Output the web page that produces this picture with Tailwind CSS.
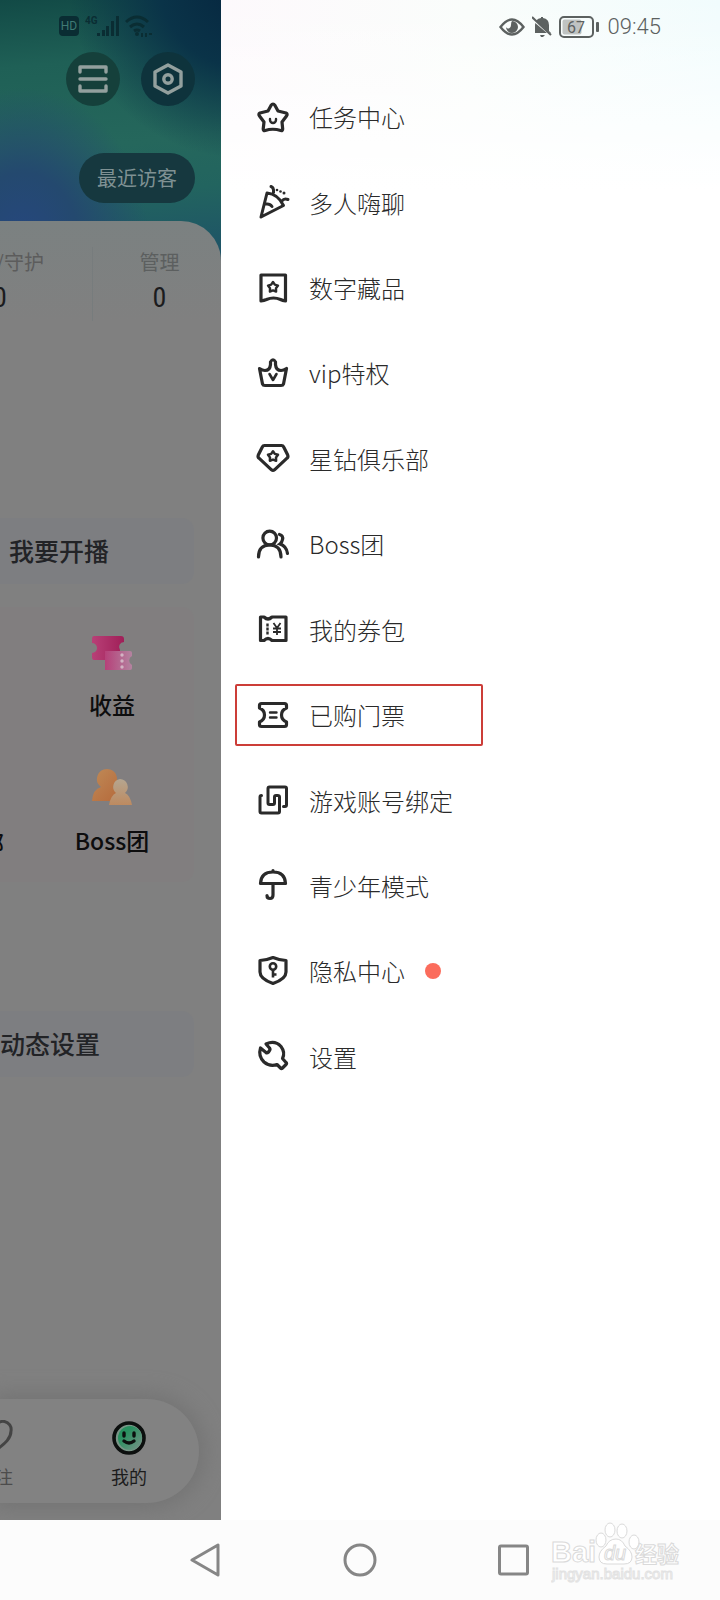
<!DOCTYPE html>
<html lang="zh-CN">
<head>
  <meta charset="UTF-8" />
  <meta name="viewport" content="width=device-width, initial-scale=1.0" />
  <title>我的</title>
  <script src="https://cdn.jsdelivr.net/npm/@tailwindcss/browser@4"></script>
</head>
<body class="min-h-screen flex flex-col bg-white font-['Noto_Sans_CJK_SC',sans-serif] overflow-x-hidden">

  <div class="flex flex-1">

    <!-- Página de perfil, escurecida -->
    <section class="w-[221px] shrink-0 flex flex-col overflow-hidden bg-[#808080]">
      <div class="bg-[radial-gradient(circle_at_110%_-5%,#06263f_0%,#0a3348_20%,transparent_42%),radial-gradient(ellipse_at_10%_75%,#26477e_0%,#24496f_20%,transparent_45%),linear-gradient(175deg,#124a46_0%,#1f6056_20%,#25675c_45%,#22645f_60%,#1e5367_80%)]">
        <header class="h-[221px] flex flex-col items-end pr-[26px]">
          <!-- Barra de status -->
          <div class="h-[52px] pr-[42px] flex items-center gap-[6px] text-[#0a2d33]">
            <svg class="w-[20px] h-[20px]" viewBox="0 0 20 20"><rect width="20" height="20" rx="4" fill="currentColor"/><text x="10" y="14" text-anchor="middle" font-family="Roboto" font-size="12" fill="#3f7a74">HD</text></svg>
            <svg class="w-[34px] h-[22px]" viewBox="0 0 34 22" fill="currentColor"><text x="0" y="9" font-family="Roboto" font-size="10" font-weight="700">4G</text><rect x="12" y="18" width="3" height="3"/><rect x="17" y="15" width="3" height="6"/><rect x="21" y="11" width="3" height="10"/><rect x="26" y="6" width="3" height="15"/><rect x="31" y="1" width="3" height="20"/></svg>
            <svg class="w-[28px] h-[22px]" viewBox="0 0 28 22" fill="none" stroke="currentColor" stroke-width="3"><path d="M1 7Q12-3 23 7M5 12q7-6 14 0M9 16q3-2 6 0"/><circle cx="12" cy="19" r="2" fill="currentColor" stroke="none"/><path d="M17 18v4M21 18v4M24 19h3" stroke-width="2"/></svg>
          </div>
          <div class="flex gap-[21px]">
            <button aria-label="扫一扫" class="size-[54px] rounded-full bg-[#15403b] grid place-items-center">
              <svg class="w-[30px] h-[28px]" viewBox="0 0 30 28" fill="none" stroke="#93a09e" stroke-width="3.4" stroke-linecap="round" stroke-linejoin="round"><path d="M2 7V2h26v5M2 14h26M2 21v5h26v-5"/></svg>
            </button>
            <button aria-label="设置" class="size-[54px] rounded-full bg-[#0e333c] grid place-items-center">
              <svg class="w-[30px] h-[32px]" viewBox="0 0 30 32" fill="none" stroke="#93a09e" stroke-width="3.4" stroke-linejoin="round"><path d="M15 2l13 7v14l-13 7-13-7V9z"/><circle cx="15" cy="16" r="4.2"/></svg>
            </button>
          </div>
          <button class="mt-[47px] h-[50px] px-[18px] rounded-full bg-[#16383f] text-[#7f9193] text-[20px]">最近访客</button>
        </header>

        <!-- Contadores -->
        <div class="h-[100px] pt-[26px] flex justify-end rounded-tr-[40px] bg-linear-to-b from-[#7b8181] to-[#808080] leading-[30px] text-center">
          <div class="w-[184px] shrink-0">
            <p class="text-[20px] text-[#5c5c5c]">粉丝/守护</p>
            <p class="mt-[6px] text-[28px] text-[#1b1c1e] font-['Liberation_Sans_Narrow','Roboto_Condensed',Roboto,sans-serif]">0</p>
          </div>
          <div class="w-[134px] -mr-[5px] shrink-0 border-l border-[#777c7d]">
            <p class="text-[20px] text-[#5c5f5f]">管理</p>
            <p class="mt-[6px] text-[28px] text-[#1b1c1e] font-['Liberation_Sans_Narrow','Roboto_Condensed',Roboto,sans-serif]">0</p>
          </div>
        </div>
      </div>

      <button class="mt-[197px] mr-[27px] h-[66px] pl-[9px] rounded-r-xl bg-[#7d7e81] text-left text-[25px] font-medium text-[#222326]">我要开播</button>

      <div class="mt-[23px] mr-[27px] h-[275px] pt-[29px] flex justify-end rounded-r-xl bg-[#817e7f] text-[23px] leading-[32px] font-medium text-[#0d0d0e]">
        <div class="flex flex-col justify-end shrink-0 pb-6">
          <p>俱乐部</p>
        </div>
        <div class="ml-[26px] w-[164px] shrink-0 flex flex-col items-center gap-[49px]">
          <div class="flex flex-col items-center">
            <svg class="w-[42px] h-[35px]" viewBox="0 0 42 35"><defs><linearGradient id="ticket" x1="0" x2="1"><stop offset="0" stop-color="#b84077"/><stop offset="1" stop-color="#a01f58"/></linearGradient><linearGradient id="ticket2" x1="0" x2="1"><stop offset="0" stop-color="#b64079"/><stop offset="1" stop-color="#b483a0"/></linearGradient></defs><path d="M3 0h27q3 0 3 3v3a5 5 0 0 0-4 8v10H3q-2 0-2-3v-4a5 5 0 0 0 0-10V3q0-3 2-3z" fill="url(#ticket)"/><path d="M14 15h25q2 0 2 2v3a5 5 0 0 0 0 9v3q0 2-2 2H14z" fill="url(#ticket2)"/><g fill="#d2b4c3"><circle cx="31" cy="19" r="1.7"/><circle cx="31" cy="25" r="1.7"/><circle cx="31" cy="31" r="1.7"/></g></svg>
            <p class="mt-[17px]">收益</p>
          </div>
          <div class="flex flex-col items-center">
            <svg class="w-[42px] h-[37px]" viewBox="0 0 42 37"><defs><linearGradient id="man" x1="0" y1="0" x2="1" y2="1"><stop offset="0" stop-color="#bf8a57"/><stop offset="1" stop-color="#b5683a"/></linearGradient><linearGradient id="man2" x1="0" y1="0" x2="0" y2="1"><stop offset="0" stop-color="#b5a690"/><stop offset="1" stop-color="#bd8a60"/></linearGradient></defs><path d="M16 0a10 10 0 0 1 6 18q7 3 9 14H1q1-12 9-14A10 10 0 0 1 16 0z" fill="url(#man)"/><path d="M29 10a8 8 0 0 1 5 14q5 2 7 12H18q2-10 7-12a8 8 0 0 1 4-14z" fill="url(#man2)"/></svg>
            <p class="mt-[18px]">Boss团</p>
          </div>
        </div>
      </div>

      <button class="mt-[129px] mr-[27px] h-[66px] rounded-r-xl bg-[#7d7e81] text-left text-[25px] font-medium text-[#222326]">动态设置</button>

      <!-- Abas inferiores -->
      <nav class="mt-auto mb-[17px] mr-[22px] h-[104px] pt-[21px] pr-[3px] flex justify-end rounded-r-full bg-[#828282] shadow-[0_0_20px_6px_#747474] text-[18px] leading-[26px]">
        <a href="#" class="w-[134px] shrink-0 flex flex-col items-center gap-[7px] text-[#4c4c4c]">
          <svg class="size-[36px]" viewBox="0 0 36 36" fill="none" stroke="#444" stroke-width="3"><path d="M18 31C7 23 2 18 2 11A8 8 0 0 1 18 8a8 8 0 0 1 16 3c0 7-5 12-16 20z"/></svg>
          <span>关注</span>
        </a>
        <a href="#" class="w-[134px] shrink-0 flex flex-col items-center gap-[7px] text-[#1c1c1c]">
          <svg class="size-[36px]" viewBox="0 0 36 36" fill="none"><defs><linearGradient id="face" x1="0" y1="0" x2="1" y2="1"><stop offset=".3" stop-color="#28905f"/><stop offset="1" stop-color="#7b9189"/></linearGradient></defs><circle cx="18" cy="18" r="15" fill="#799487" stroke="#0c0f0e" stroke-width="3.6"/><circle cx="19" cy="18" r="12" fill="url(#face)"/><path d="M13 13v3M23 13v3M13 21q5 4 10 0" stroke="#0c0f0e" stroke-width="3.4" stroke-linecap="round"/></svg>
          <span>我的</span>
        </a>
      </nav>
    </section>

    <!-- Menu lateral -->
    <main class="flex-1 flex flex-col bg-[linear-gradient(to_bottom,transparent,#fff_190px),linear-gradient(to_right,#fdf9fc,#fafdfb_50%,#f1fcfd)]">
      <div class="h-[54px] pr-[59px] flex items-center justify-end gap-[7px] text-[#5c6160]">
        <svg class="w-[26px] h-[18px]" viewBox="0 0 26 18"><path d="M1.500 9Q13-6 24.500 9 13 24 1.500 9z" fill="none" stroke="currentColor" stroke-width="2.400"/><path d="M13 3a6 6 0 1 1-6 6q1 2 3 1.500T12 7t1-4z" fill="currentColor"/></svg>
        <svg class="w-[20px] h-[22px]" viewBox="0 0 20 22"><path d="M3 17V9q0-6 6-7V1h2v1q6 1 6 7v6l2 2z" fill="currentColor"/><path d="M8 19h5l-2 2H9z" fill="currentColor"/><path d="M0 3l20 17" stroke="#fafcfb" stroke-width="2"/><path d="M0 1l19 18" stroke="currentColor" stroke-width="2"/></svg>
        <svg class="w-[40px] h-[22px]" viewBox="0 0 40 22"><rect x="1" y="1" width="33" height="20" rx="4" fill="none" stroke="currentColor" stroke-width="2"/><rect x="3.500" y="3.500" width="19" height="15" rx="2" fill="#bfc3c2"/><rect x="37" y="6" width="3" height="10" rx="1" fill="currentColor"/><text x="17" y="17" text-anchor="middle" font-family="Roboto" font-size="16" fill="currentColor">67</text></svg>
        <time class="pl-[2px] text-[22px] leading-[30px] font-light font-[Roboto,sans-serif]">09:45</time>
      </div>

      <ul class="mt-[20px] h-[1025px] grid auto-rows-fr items-center pl-[14px] text-[24px] font-light text-[#2a2a2a]">
        <li>
          <a href="#" class="w-[248px] h-[62px] pl-[18px] flex items-center gap-[18px] border-2 border-transparent">
            <svg class="size-[36px]" viewBox="0 0 36 36" fill="none" stroke="currentColor" stroke-width="3.2" stroke-linecap="round" stroke-linejoin="round"><path d="M16 6.500q2-3 4 0l3 5.500 8 2q2 1 .5 3l-4.500 6 .7 7q0 2-2 1.500-8-2.500-15.500 0-2 .5-2-1.500l.8-7-4.500-6q-1.500-2 .5-3l8-2z"/><path d="M15 20v1a3 3 0 0 0 6 0v-1" stroke-width="2.400"/></svg>
            <span class="pt-px">任务中心</span>
          </a>
        </li>
        <li>
          <a href="#" class="w-[248px] h-[62px] pl-[18px] flex items-center gap-[18px] border-2 border-transparent">
            <svg class="size-[36px]" viewBox="0 0 36 36" fill="none" stroke="currentColor" stroke-width="3" stroke-linecap="round" stroke-linejoin="round"><path d="M12 9L6 33l22.500-11.500Q23 10 12 9zM11 20q4-.5 6 2.500M16 2.500q3 1 2.500 6M27 17q2-3 6-1.500"/><g fill="currentColor" stroke="none"><circle cx="22" cy="6" r="1.300"/><circle cx="25.500" cy="7.500" r="1.300"/><circle cx="29" cy="9" r="1.500"/></g></svg>
            <span class="pt-px">多人嗨聊</span>
          </a>
        </li>
        <li>
          <a href="#" class="w-[248px] h-[62px] pl-[18px] flex items-center gap-[18px] border-2 border-transparent">
            <svg class="size-[36px]" viewBox="0 0 36 36" fill="none" stroke="currentColor" stroke-width="3.2" stroke-linejoin="round"><path d="M6 5h24.500v26q-3-.5-5-1.500-7-3-14 0-2.500 1-5.500 1.500z"/><path d="M18 12l1.800 2.700 3.200.9-2 2.600.1 3.300-3.100-1.100-3.100 1.100.1-3.300-2-2.600 3.200-.9z" stroke-width="2.400"/></svg>
            <span class="pt-px">数字藏品</span>
          </a>
        </li>
        <li>
          <a href="#" class="w-[248px] h-[62px] pl-[18px] flex items-center gap-[18px] border-2 border-transparent">
            <svg class="size-[36px]" viewBox="0 0 36 36" fill="none" stroke="currentColor" stroke-width="3.2" stroke-linecap="round" stroke-linejoin="round"><path d="M4.500 13.500q3 2 5.500 2 5 0 5.500-6V7q2.500-4.500 5 0v2.500q.5 6 5.500 6 2.500 0 5.500-2L28.500 29q-.5 1.500-2.500 1.500h-16q-2 0-2.500-1.500z"/><path d="M14.500 19l3.500 6 3.500-6" stroke-width="2.600"/></svg>
            <span class="pt-px">vip特权</span>
          </a>
        </li>
        <li>
          <a href="#" class="w-[248px] h-[62px] pl-[18px] flex items-center gap-[18px] border-2 border-transparent">
            <svg class="size-[36px]" viewBox="0 0 36 36" fill="none" stroke="currentColor" stroke-width="3.2" stroke-linejoin="round"><path d="M9.500 5.500h17q1.500 0 2.200 1.500l4 8q.8 2-.7 3.200L19.500 29.800q-1.500 1.200-3 0L4 18.200q-1.500-1.200-.7-3.200l4-8q.7-1.500 2.200-1.500z"/><path d="M18 11.200l1.800 2.700 3.200.9-2 2.600.1 3.300-3.100-1.100-3.100 1.100.1-3.300-2-2.600 3.200-.9z" stroke-width="2.500"/></svg>
            <span class="pt-px">星钻俱乐部</span>
          </a>
        </li>
        <li>
          <a href="#" class="w-[248px] h-[62px] pl-[18px] flex items-center gap-[18px] border-2 border-transparent">
            <svg class="size-[36px]" viewBox="0 0 36 36" fill="none" stroke="currentColor" stroke-width="3.2" stroke-linecap="round"><circle cx="14.700" cy="12" r="6.800"/><path d="M3.500 31q0-12 11.200-12t11.300 12M24.500 8.500q4 1 3 5-.5 3-2.500 4.500 6.500 2 7.500 9.500"/></svg>
            <span class="pt-px">Boss团</span>
          </a>
        </li>
        <li>
          <a href="#" class="w-[248px] h-[62px] pl-[18px] flex items-center gap-[18px] border-2 border-transparent">
            <svg class="size-[36px]" viewBox="0 0 36 36" fill="none" stroke="currentColor" stroke-width="3.200" stroke-linejoin="round"><path d="M5.500 6h3.500q4 4 8 0h14v23.500H17q-4-4-8 0H5.500z"/><path d="M12.500 12.500v3M12.500 16.500v3M12.500 20.500v3" stroke-width="2.400"/><path d="M18.500 12l3.500 5 3.500-5M18 17.500h8M18 21h8M22 17v7" stroke-width="1.800"/></svg>
            <span class="pt-px">我的券包</span>
          </a>
        </li>
        <li>
          <a href="#" class="w-[248px] h-[62px] pl-[18px] flex items-center gap-[18px] border-2 border-[#cc3d38] rounded-xs">
            <svg class="size-[36px]" viewBox="0 0 36 36" fill="none" stroke="currentColor" stroke-width="3.200" stroke-linejoin="round" stroke-linecap="round"><path d="M6.500 6.500h23q2 0 2 2v2.500q-5 2-5 7t5 7v2.500q0 2-2 2h-23q-2 0-2-2V25q5-2 5-7t-5-7V8.500q0-2 2-2z"/><path d="M15 15.500h6.500M15 20.500h6.500" stroke-width="2.400"/></svg>
            <span class="pt-px">已购门票</span>
          </a>
        </li>
        <li>
          <a href="#" class="w-[248px] h-[62px] pl-[18px] flex items-center gap-[18px] border-2 border-transparent">
            <svg class="size-[36px]" viewBox="0 0 36 36" fill="none" stroke="currentColor" stroke-width="3" stroke-linejoin="round" stroke-linecap="round"><path d="M28.500 24.500H30q1.500 0 1.500-1.500V6.500Q31.500 5 30 5H14.500Q13 5 13 6.500V21q0 1.500 1.500 1.500H18q1.500 0 1.500-1.500v-6M22.500 13.500q2 0 2 1.500v14.500q0 1.500-1.500 1.500H6.500Q5 31 5 29.500V15q0-1.500 1.500-1.500M19.500 15q0-1.500 1.500-1.500h1.500"/></svg>
            <span class="pt-px">游戏账号绑定</span>
          </a>
        </li>
        <li>
          <a href="#" class="w-[248px] h-[62px] pl-[18px] flex items-center gap-[18px] border-2 border-transparent">
            <svg class="size-[36px]" viewBox="0 0 36 36" fill="none" stroke="currentColor" stroke-width="3.200" stroke-linejoin="round" stroke-linecap="round"><path d="M5.500 16.500Q6 5 18 5t12.500 11.500zM18 3.500V5M18 17v11q0 3.500-3 3.500t-3-3"/></svg>
            <span class="pt-px">青少年模式</span>
          </a>
        </li>
        <li>
          <a href="#" class="w-[248px] h-[62px] pl-[18px] flex items-center gap-[18px] border-2 border-transparent">
            <svg class="size-[36px]" viewBox="0 0 36 36" fill="none" stroke="currentColor" stroke-width="3.200" stroke-linejoin="round"><path d="M18 4.500q6 2.500 13 3V19q0 7-13 11.500Q5 26 5 19V7.500q7-.5 13-3z"/><path d="M18 16.500v8M18 21.500h3.500" stroke-width="2.600"/><circle cx="18" cy="13.500" r="3.200" stroke-width="2.600"/></svg>
            <span class="pt-px">隐私中心</span>
            <span class="ml-[2px] size-[16px] rounded-full bg-[#fb6c5c]"></span>
          </a>
        </li>
        <li>
          <a href="#" class="w-[248px] h-[62px] pl-[18px] flex items-center gap-[18px] border-2 border-transparent">
            <svg class="size-[36px]" viewBox="0 0 36 36" fill="none" stroke="currentColor" stroke-width="3.200" stroke-linejoin="round"><path d="M11 6q9-4 15 2.500 4.500 6 1.500 12l3.500 4q1 1 0 2L27.500 30q-1 1-2 0L22 26.500q-7 2.500-13-2.500-6-6-3.500-14l5.500 4.500q1 1 2.500-.5l1-1.500q1-1 0-2.500z"/></svg>
            <span class="pt-px">设置</span>
          </a>
        </li>
      </ul>
    </main>
  </div>

  <!-- Navegação do sistema -->
  <footer class="relative h-[80px] flex items-center justify-center gap-[121px] bg-[#fcfcfc] text-[#868686]">
    <button aria-label="返回"><svg class="w-[32px] h-[34px]" viewBox="0 0 32 34" fill="none" stroke="currentColor" stroke-width="3" stroke-linejoin="round"><path d="M2 17L28 2v30z"/></svg></button>
    <button aria-label="主页"><svg class="size-[34px]" viewBox="0 0 34 34" fill="none" stroke="currentColor" stroke-width="3"><circle cx="17" cy="17" r="15"/></svg></button>
    <button aria-label="最近任务"><svg class="size-[32px]" viewBox="0 0 32 32" fill="none" stroke="currentColor" stroke-width="3"><rect x="1.500" y="2" width="28" height="28" rx="1.500"/></svg></button>
    <svg class="absolute right-[37px] top-0 w-[132px] h-[66px]" viewBox="0 0 132 66" fill="#fff" stroke="#dadada" stroke-width="1">
      <text x="0" y="42" font-family="Liberation Sans" font-weight="700" font-size="29">Bai</text>
      <ellipse cx="59" cy="10" rx="5" ry="7"/><ellipse cx="71" cy="11" rx="5" ry="7"/><ellipse cx="50" cy="20" rx="5" ry="7"/><ellipse cx="83" cy="22" rx="5" ry="7"/>
      <path d="M65 19q6 0 9 7 7 5 7 11 0 7-8 7H56q-8 0-8-7 0-6 7-11 3-7 10-7z"/>
      <text x="53" y="40" font-family="Liberation Sans" font-style="italic" font-size="20">du</text>
      <text x="84" y="42" font-family="Noto Sans CJK SC" font-weight="700" font-size="22">经验</text>
      <text x="1" y="59" font-family="Liberation Sans" font-size="15" stroke="#e2e2e2">jingyan.baidu.com</text>
    </svg>
  </footer>

</body>
</html>
